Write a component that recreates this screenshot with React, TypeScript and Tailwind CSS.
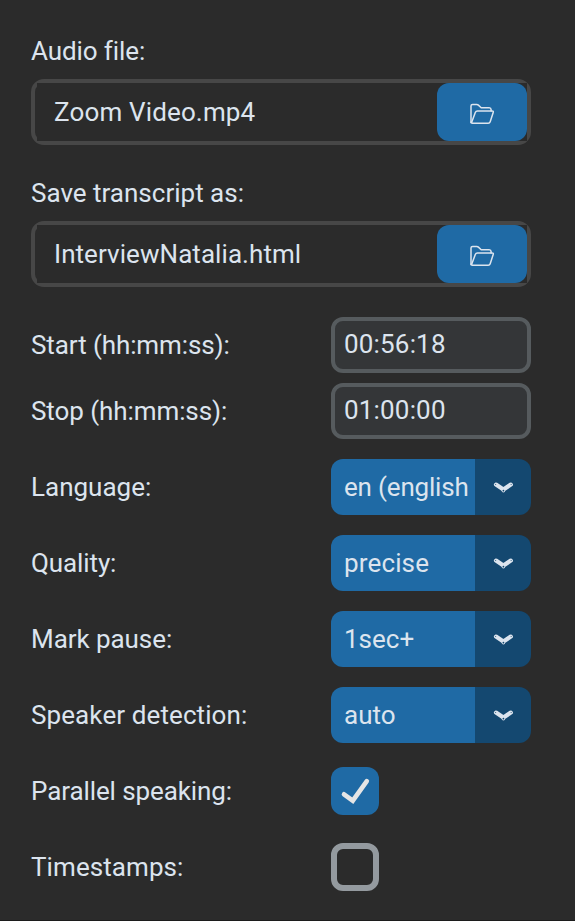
import React from "react";

function FolderIcon() {
  return (
    <svg width="26" height="24" viewBox="0 0 26 24" fill="none" stroke="#dce4ee" strokeWidth="1.5" strokeLinejoin="round" strokeLinecap="round">
      <path d="M2 20.5V4Q2 2.4 3.6 2.4H7.8Q8.7 2.4 9.4 3.1L12.2 5.8H20.2Q22 5.8 22.1 7.6V8.9" />
      <path d="M2.4 21L6.3 10.5Q6.9 8.9 8.4 8.9H23Q24.7 8.9 24.2 10.5L21.2 19.8Q20.7 21.3 19.2 21.3H3.4Q2 21.3 2 20" />
    </svg>
  );
}

function FileField({ label, value, labelTracking = "", tracking }: { label: string; value: string; labelTracking?: string; tracking: string }) {
  return (
    <div className="flex flex-col">
      <label className={"h-[38px] leading-[38px] " + labelTracking}>{label}</label>
      <div className="mt-[9px] w-[500px] rounded-[13px] border-4 border-[#474747] bg-[#2b2b2b]">
        <div className="ml-0.5 flex h-[58px] items-center justify-between bg-[#2b2b2b]">
          <span className={"pl-[17px] pb-px " + tracking}>{value}</span>
          <button className="flex h-[58px] w-[90px] items-center justify-center rounded-[12px] bg-[#1f6aa5] pt-1">
            <FolderIcon />
          </button>
        </div>
      </div>
    </div>
  );
}

function Row({ label, tracking = "", children }: { label: string; tracking?: string; children: React.ReactNode }) {
  return (
    <div className="flex h-14 items-center">
      <span className={"w-[300px] " + tracking}>{label}</span>
      {children}
    </div>
  );
}

function TimeInput({ value }: { value: string }) {
  return (
    <div className="flex h-14 w-[200px] items-center rounded-[12px] border-4 border-[#565b5e] bg-[#343638] pb-[3px] pl-[9px] tracking-[0.18px]">
      {value}
    </div>
  );
}

function Select({ value, tracking = "" }: { value: string; tracking?: string }) {
  return (
    <div className="flex h-14 w-[200px] overflow-hidden rounded-[12px]">
      <div className={"flex w-36 items-center whitespace-nowrap bg-[#1f6aa5] pl-[13px] " + tracking}>{value}</div>
      <div className="flex w-14 items-center justify-center bg-[#144870]">
        <svg width="20" height="12" viewBox="0 0 20 12" fill="none" strokeLinecap="round" strokeLinejoin="round">
          <path d="M3 3.6L10.4 8.6L17.8 3.6" stroke="#dce4ee" strokeWidth="4.2" />
          <circle cx="10.4" cy="9.8" r="1.8" fill="#dce4ee" />
          <g fill="#144870">
            <circle cx="2.7" cy="3.5" r="0.5" />
            <circle cx="18.1" cy="3.5" r="0.5" />
            <circle cx="10.4" cy="9.7" r="0.9" />
          </g>
        </svg>
      </div>
    </div>
  );
}

export default function App() {
  return (
    <main className="h-[921px] w-[575px] overflow-hidden border-b border-[#1c1c1c] bg-[#2b2b2b] pl-[31px] pt-8 font-['Roboto',sans-serif] text-[26px] leading-[30px] text-[#dce4ee] [font-variant-ligatures:none]">
      <div className="flex flex-col gap-[29px]">
        <FileField label="Audio file:" value="Zoom Video.mp4" labelTracking="tracking-[-0.1px]" tracking="tracking-[0.15px]" />
        <FileField label="Save transcript as:" value="InterviewNatalia.html" tracking="tracking-[0.06px]" />
      </div>
      <div className="mt-[30px] flex flex-col gap-5">
        <div className="flex flex-col gap-2.5">
          <Row label="Start (hh:mm:ss):" tracking="tracking-[-0.1px]"><TimeInput value="00:56:18" /></Row>
          <Row label="Stop (hh:mm:ss):" tracking="tracking-[-0.08px]"><TimeInput value="01:00:00" /></Row>
        </div>
        <Row label="Language:"><Select value="en (english" tracking="tracking-[-0.18px]" /></Row>
        <Row label="Quality:" tracking="tracking-[-0.1px]"><Select value="precise" tracking="tracking-[0.14px]" /></Row>
        <Row label="Mark pause:" tracking="tracking-[-0.06px]"><Select value="1sec+" /></Row>
        <Row label="Speaker detection:" tracking="tracking-[0.1px]"><Select value="auto" /></Row>
        <Row label="Parallel speaking:" tracking="tracking-[-0.1px]">
          <div className="size-12 rounded-[12px] bg-[#1f6aa5]">
            <svg viewBox="0 0 48 48" fill="none" stroke="#e5e5e5" strokeWidth="4.6" strokeLinecap="round">
              <path d="M13 27.3L21.8 33.7L35.8 14.2" />
            </svg>
          </div>
        </Row>
        <Row label="Timestamps:" tracking="tracking-[0.08px]">
          <div className="size-12 rounded-[12px] border-6 border-[#949a9f]" />
        </Row>
      </div>
    </main>
  );
}
